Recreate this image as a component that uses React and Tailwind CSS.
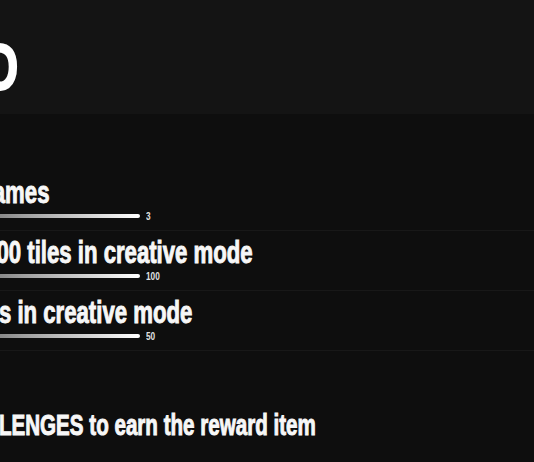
import React from "react";

const challenges = [
  { id: 1, title: "Play 3 games", goal: 3 },
  { id: 2, title: "Rotate 100 tiles in creative mode", goal: 100 },
  { id: 3, title: "Edit walls in creative mode", goal: 50 },
];

const ChallengeRow = ({ challenge }) => (
  <div className="pt-[6px] pb-[9px] border-b border-[#181818]">
    <h3 className="text-[31px] leading-[31px] font-bold whitespace-nowrap text-[#f7f7f7] [-webkit-text-stroke:1px_#f7f7f7] origin-left scale-x-[0.715]">
      {challenge.title}
    </h3>
    <div className="mt-[3px] h-[10px] flex items-center gap-[6px]">
      {/* progress bar */}
      <div className="w-[231px] h-[4px] rounded-full bg-gradient-to-r from-[#3c3c3c] via-[#a0a0a0] to-white" />
      <span className="inline-block text-[11px] leading-none font-bold text-[#e2e2e2] origin-left scale-x-[0.75]">
        {challenge.goal}
      </span>
    </div>
  </div>
);

export default function App() {
  return (
    <div className="w-[534px] h-[462px] overflow-hidden bg-[#0e0e0e] text-white font-['Liberation_Sans',Arial,sans-serif]">
      {/* Header */}
      <div className="h-[114px] pt-[33px] bg-[#141414]">
        <h1 className="-ml-[193px] text-[67px] leading-[67px] font-bold whitespace-nowrap [-webkit-text-stroke:2px_white] origin-left scale-x-[0.71]">
          REWARD
        </h1>
      </div>

      {/* Challenge list */}
      <div className="mt-[57px] -ml-[91px] w-[720px]">
        {challenges.map((c) => (
          <ChallengeRow key={c.id} challenge={c} />
        ))}
      </div>

      {/* Footer */}
      <p className="mt-[60px] -ml-[223px] text-[29px] leading-[29px] font-bold whitespace-nowrap text-[#f7f7f7] [-webkit-text-stroke:1px_#f7f7f7] origin-left scale-x-[0.71]">
        COMPLETE ALL CHALLENGES to earn the reward item
      </p>
    </div>
  );
}
